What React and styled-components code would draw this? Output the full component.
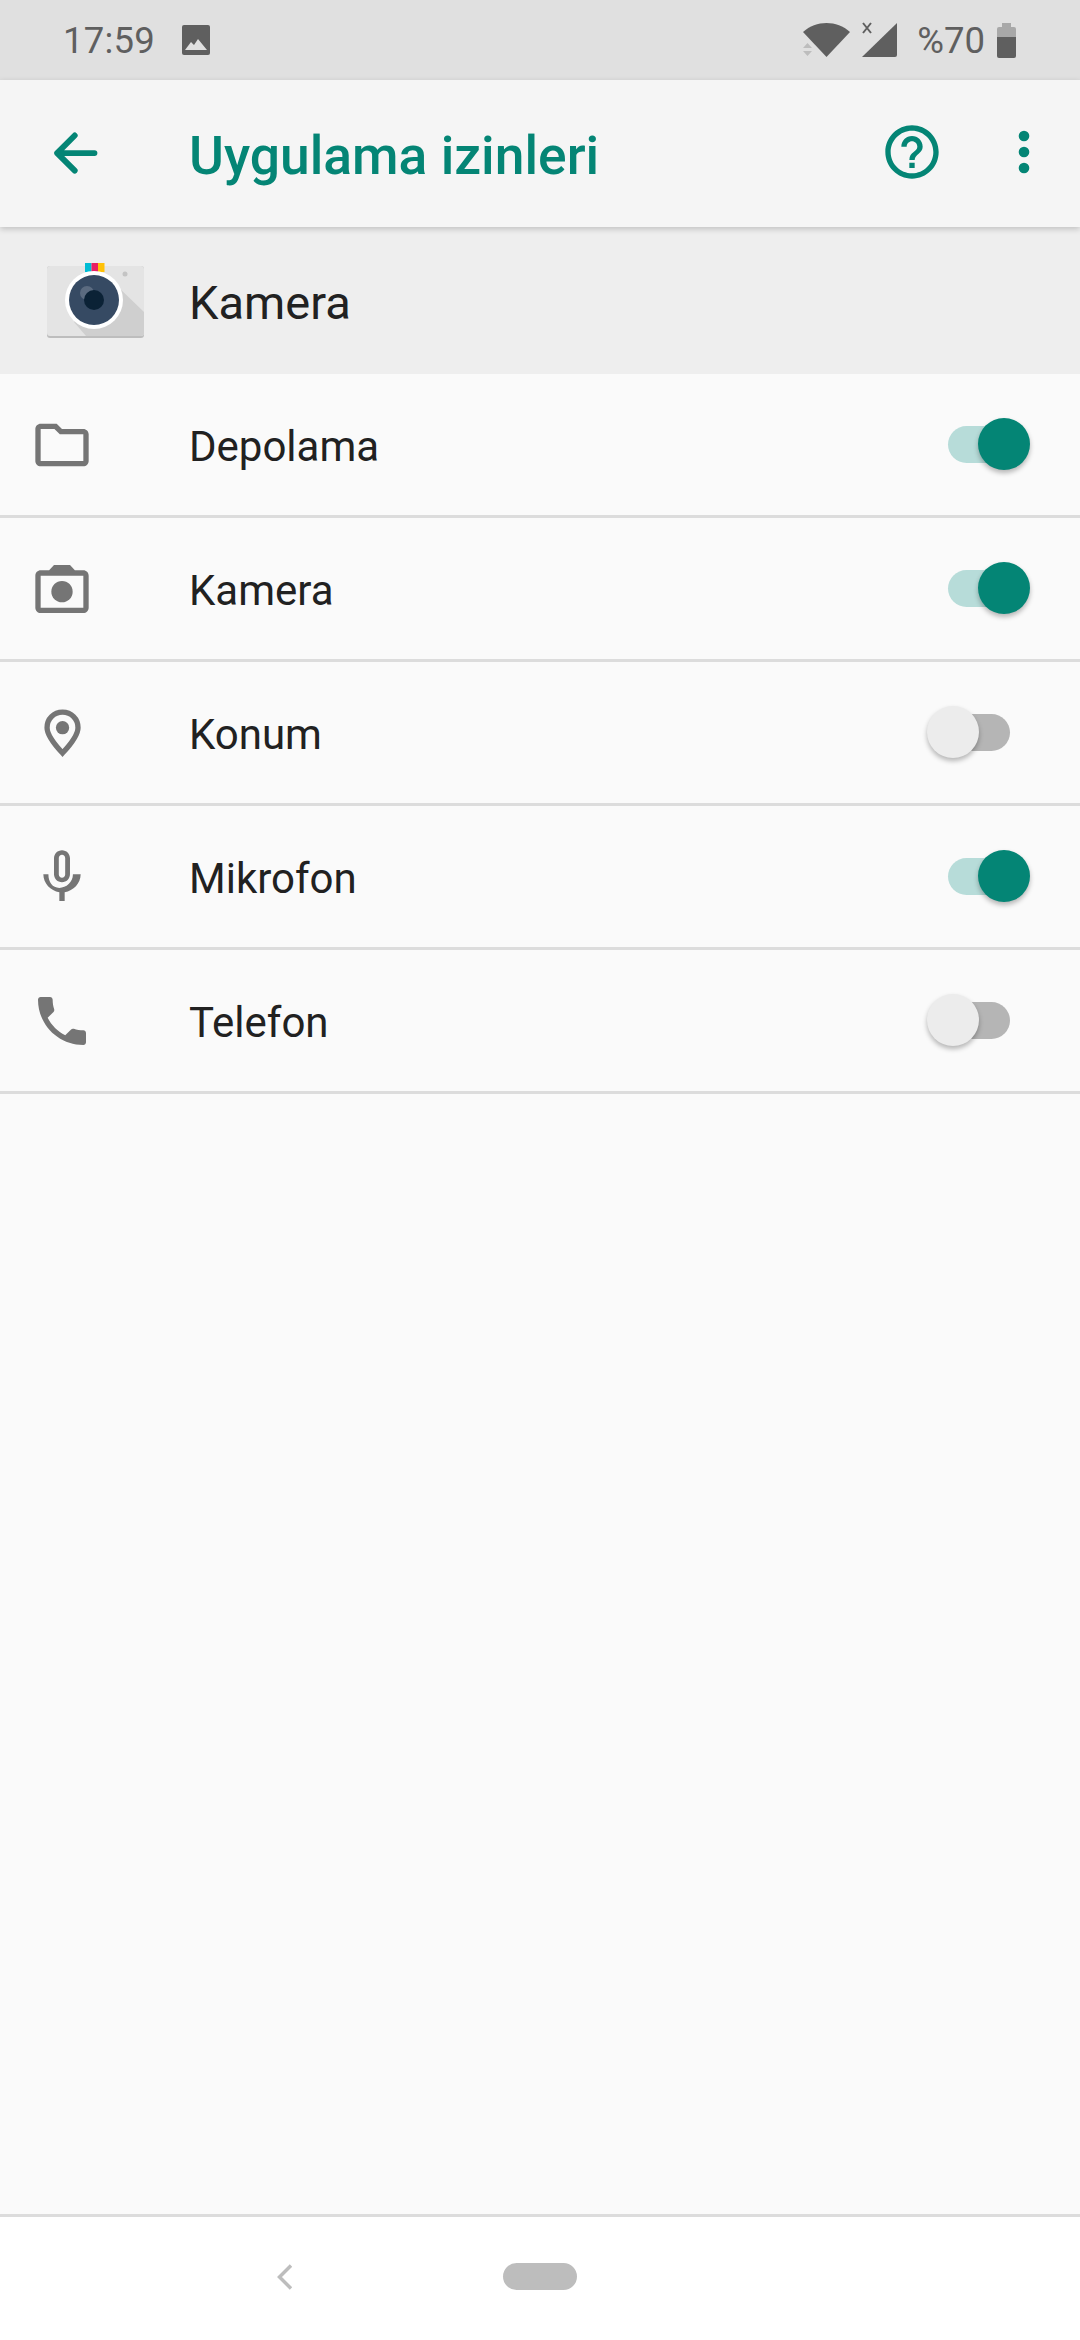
import React from 'react'
import styled, { createGlobalStyle } from 'styled-components'

const GlobalStyle = createGlobalStyle`
html, body {
    margin: 0;
    padding: 0;
    background: #fafafa;
    font-family: Roboto, "Noto Sans", sans-serif;
}
`;

const Screen = styled.div`
display: flex;
flex-direction: column;
width: 1080px;
height: 2340px;
overflow: hidden;
background: #fafafa;
`;

const StatusBar = styled.div`
display: flex;
align-items: center;
flex: 0 0 80px;
box-sizing: border-box;
padding: 0 64px 0 63px;
background: #e0e0e0;
color: #5f5f5f;
font-size: 36.5px;
svg {
    display: block;
}
`;

const StatusTime = styled.span`
margin-right: 26px;
letter-spacing: 0.2px;
`;

const StatusRight = styled.div`
display: flex;
align-items: center;
margin-left: auto;
`;

const StatusLevel = styled.span`
margin: 0 12px 0 19px;
`;

const SignalIcon = styled.svg`
margin-left: 12px;
`;

const Toolbar = styled.header`
position: relative;
z-index: 1;
display: flex;
align-items: center;
flex: 0 0 147px;
box-sizing: border-box;
padding: 0 24px 3px 43px;
background: #f5f5f5;
box-shadow: 0 2px 6px rgba(0, 0, 0, 0.2);
`;

const Title = styled.h1`
flex: 1;
margin: 6px 0 0 82px;
color: #048575;
font-size: 53.4px;
font-weight: 500;
`;

const ToolIcon = styled.svg`
display: block;
width: 64px;
height: 64px;
margin-left: ${props => props.gap}px;
fill: #048575;
`;

const AppHeader = styled.div`
display: flex;
align-items: center;
flex: 0 0 147px;
box-sizing: border-box;
padding-left: 44px;
background: #eeeeee;
svg {
    display: block;
}
`;

const AppName = styled.span`
margin-left: 43px;
padding-top: 4px;
color: #212121;
font-size: 47px;
`;

const PermissionRow = styled.div`
display: flex;
align-items: center;
flex: 0 0 144px;
box-sizing: border-box;
padding: 0 70px 0 30px;
border-bottom: 3px solid #dcdcdc;
`;

const RowIcon = styled.svg`
display: block;
flex: none;
width: 64px;
height: 64px;
margin-right: 95px;
fill: #757575;
`;

const RowLabel = styled.span`
flex: 1;
padding-top: 4px;
color: #212121;
font-size: 42px;
`;

const Track = styled.div`
position: relative;
width: 62px;
height: 37px;
border-radius: 19px;
background: ${props => props.on ? '#b7dcd9' : '#b5b5b5'};
`;

const Thumb = styled.div`
position: absolute;
top: -8px;
left: ${props => props.on ? '30px' : '-21px'};
width: 52px;
height: 52px;
border-radius: 50%;
background: ${props => props.on ? '#048575' : '#ececec'};
box-shadow: 0 3px 5px rgba(0, 0, 0, 0.28);
`;

const Spacer = styled.div`
flex: 1;
`;

const NavBar = styled.nav`
display: flex;
align-items: center;
flex: 0 0 126px;
box-sizing: border-box;
padding: 0 0 4px 277px;
border-top: 3px solid #dcdcdc;
background: #ffffff;
svg {
    display: block;
}
`;

const HomePill = styled.div`
width: 74px;
height: 27px;
margin-left: 211px;
border-radius: 14px;
background: #bdbdbd;
`;

const permissions = [
    { label: 'Depolama', on: true, icon: <path fillRule="evenodd" d="M9.17 6l2 2H20v10H4V6h5.17M10 4H4c-1.1 0-1.99.9-1.99 2L2 18c0 1.1.9 2 2 2h16c1.1 0 2-.9 2-2V8c0-1.1-.9-2-2-2h-8l-2-2z" /> },
    { label: 'Kamera', on: true, icon: <><path fillRule="evenodd" d="M20 5h-3.17L15 3H9L7.17 5H4c-1.1 0-2 .9-2 2v12c0 1.1.9 2 2 2h16c1.1 0 2-.9 2-2V7c0-1.1-.9-2-2-2zm0 14H4V7h16v12z" /><circle cx="12" cy="13" r="4" /></> },
    { label: 'Konum', on: false, icon: <><path fill="none" stroke="#757575" strokeWidth="2" d="M12.200 4.200C8.900 4.200 6.400 6.700 6.400 10c0 3 3 6.500 5.800 9.500 2.800-3 5.800-6.500 5.800-9.500 0-3.300-2.500-5.800-5.800-5.800z" /><circle cx="12.200" cy="10" r="2.500" /></> },
    { label: 'Mikrofon', on: true, icon: <path fillRule="evenodd" d="M12 14c1.660 0 2.990-1.340 2.990-3L15 5c0-1.660-1.340-3-3-3S9 3.340 9 5v6c0 1.660 1.340 3 3 3zm-1.200-9.100c0-.660.540-1.200 1.200-1.200.660 0 1.200.540 1.200 1.200l-.010 6.200c0 .660-.530 1.200-1.190 1.200-.660 0-1.200-.540-1.200-1.200V4.900zm5.300 6.100c0 3-2.540 5.100-5.100 5.100S6.900 14 6.900 11H5c0 3.410 2.720 6.230 6 6.720V21h2v-3.280c3.280-.480 6-3.300 6-6.720h-1.900z" /> },
    { label: 'Telefon', on: false, icon: <path d="M6.620 10.790c1.440 2.830 3.760 5.140 6.590 6.590l2.200-2.200c.270-.270.670-.360 1.020-.240 1.120.370 2.330.570 3.570.570.550 0 1 .450 1 1V20c0 .550-.450 1-1 1-9.390 0-17-7.610-17-17 0-.550.450-1 1-1h3.500c.550 0 1 .450 1 1 0 1.250.200 2.450.570 3.570.110.350.030.740-.250 1.020l-2.200 2.200z" /> },
]

function AppIcon() {
    return (
        <svg width="102" height="78" viewBox="0 0 102 78">
            <rect x="3" y="4" width="97" height="72" rx="3" fill="#bdbdbd" />
            <rect x="3" y="4" width="97" height="70" rx="3" fill="#e4e4e4" />
            <path d="M72 23L100 50V71a3 3 0 0 1-3 3H42L30 60z" fill="#cfcfcf" />
            <rect x="41" y="1" width="6.500" height="9" fill="#00bcd4" />
            <rect x="47.500" y="1" width="6.500" height="9" fill="#e91e63" />
            <rect x="54" y="1" width="6.500" height="9" fill="#ffc107" />
            <circle cx="81" cy="12" r="2.500" fill="#c4c4c4" />
            <circle cx="50" cy="38" r="29" fill="#ffffff" />
            <circle cx="50" cy="38" r="25" fill="#364a63" />
            <circle cx="43" cy="31" r="7" fill="#5b6b80" />
            <circle cx="50" cy="38" r="10" fill="#0b2236" />
        </svg>
    )
}

function App() {
    return (
        <Screen>
            <GlobalStyle />
            <StatusBar>
                <StatusTime>17:59</StatusTime>
                <svg width="30" height="30" viewBox="0 0 30 30">
                    <rect x="1" y="0" width="28" height="30" rx="2" fill="#5f5f5f" />
                    <path d="M4 25l6-8 3 3 4-6 9 11z" fill="#e0e0e0" />
                </svg>
                <StatusRight>
                    <svg width="47" height="36" viewBox="0 0 47 36">
                        <path d="M0 10C13-2 34-2 47 10L23.500 35z" fill="#5f5f5f" />
                        <path d="M0 26l4.500-5 4.500 5zM0 29h9l-4.500 5z" fill="#bdbdbd" />
                    </svg>
                    <SignalIcon width="36" height="36" viewBox="0 0 36 36">
                        <path d="M0 35L35 1v32a2 2 0 0 1-2 2z" fill="#5f5f5f" />
                        <path d="M1 1l8 10M9 1l-8 10" stroke="#5f5f5f" strokeWidth="2" />
                    </SignalIcon>
                    <StatusLevel>%70</StatusLevel>
                    <svg width="19" height="35" viewBox="0 0 19 35">
                        <path d="M5 0h9v4h3a2 2 0 0 1 2 2v8H0V6a2 2 0 0 1 2-2h3z" fill="#a8a8a8" />
                        <path d="M0 14h19v19a2 2 0 0 1-2 2H2a2 2 0 0 1-2-2z" fill="#5f5f5f" />
                    </svg>
                </StatusRight>
            </StatusBar>
            <Toolbar>
                <ToolIcon viewBox="0 0 24 24" gap={0}>
                    <path d="M19.300 12.400H5.300M11.900 5.800L5.300 12.400l6.600 6.600" fill="none" stroke="#048575" strokeWidth="2.200" strokeLinecap="round" strokeLinejoin="round" />
                </ToolIcon>
                <Title>Uygulama izinleri</Title>
                <ToolIcon viewBox="0 0 24 24" gap={0}>
                    <path fillRule="evenodd" d="M11 18h2v-2h-2v2zm1-16C6.480 2 2 6.480 2 12s4.480 10 10 10 10-4.480 10-10S17.520 2 12 2zm0 18c-4.410 0-8-3.590-8-8s3.590-8 8-8 8 3.590 8 8-3.590 8-8 8zm0-14c-2.210 0-4 1.790-4 4h2c0-1.100.9-2 2-2s2 .9 2 2c0 2-3 1.750-3 5h2c0-2.250 3-2.500 3-5 0-2.210-1.790-4-4-4z" />
                </ToolIcon>
                <ToolIcon viewBox="0 0 24 24" gap={48}>
                    <circle cx="12" cy="6" r="2" />
                    <circle cx="12" cy="12" r="2" />
                    <circle cx="12" cy="18" r="2" />
                </ToolIcon>
            </Toolbar>
            <AppHeader>
                <AppIcon />
                <AppName>Kamera</AppName>
            </AppHeader>
            {permissions.map(item => (
                <PermissionRow key={item.label}>
                    <RowIcon viewBox="0 0 24 24">{item.icon}</RowIcon>
                    <RowLabel>{item.label}</RowLabel>
                    <Track on={item.on ? 1 : 0}>
                        <Thumb on={item.on ? 1 : 0} />
                    </Track>
                </PermissionRow>
            ))}
            <Spacer />
            <NavBar>
                <svg width="15" height="26" viewBox="0 0 15 26">
                    <path d="M14 1.500L2.500 13 14 24.500" fill="none" stroke="#bdbdbd" strokeWidth="3.500" />
                </svg>
                <HomePill />
            </NavBar>
        </Screen>
    )
}

export default App
